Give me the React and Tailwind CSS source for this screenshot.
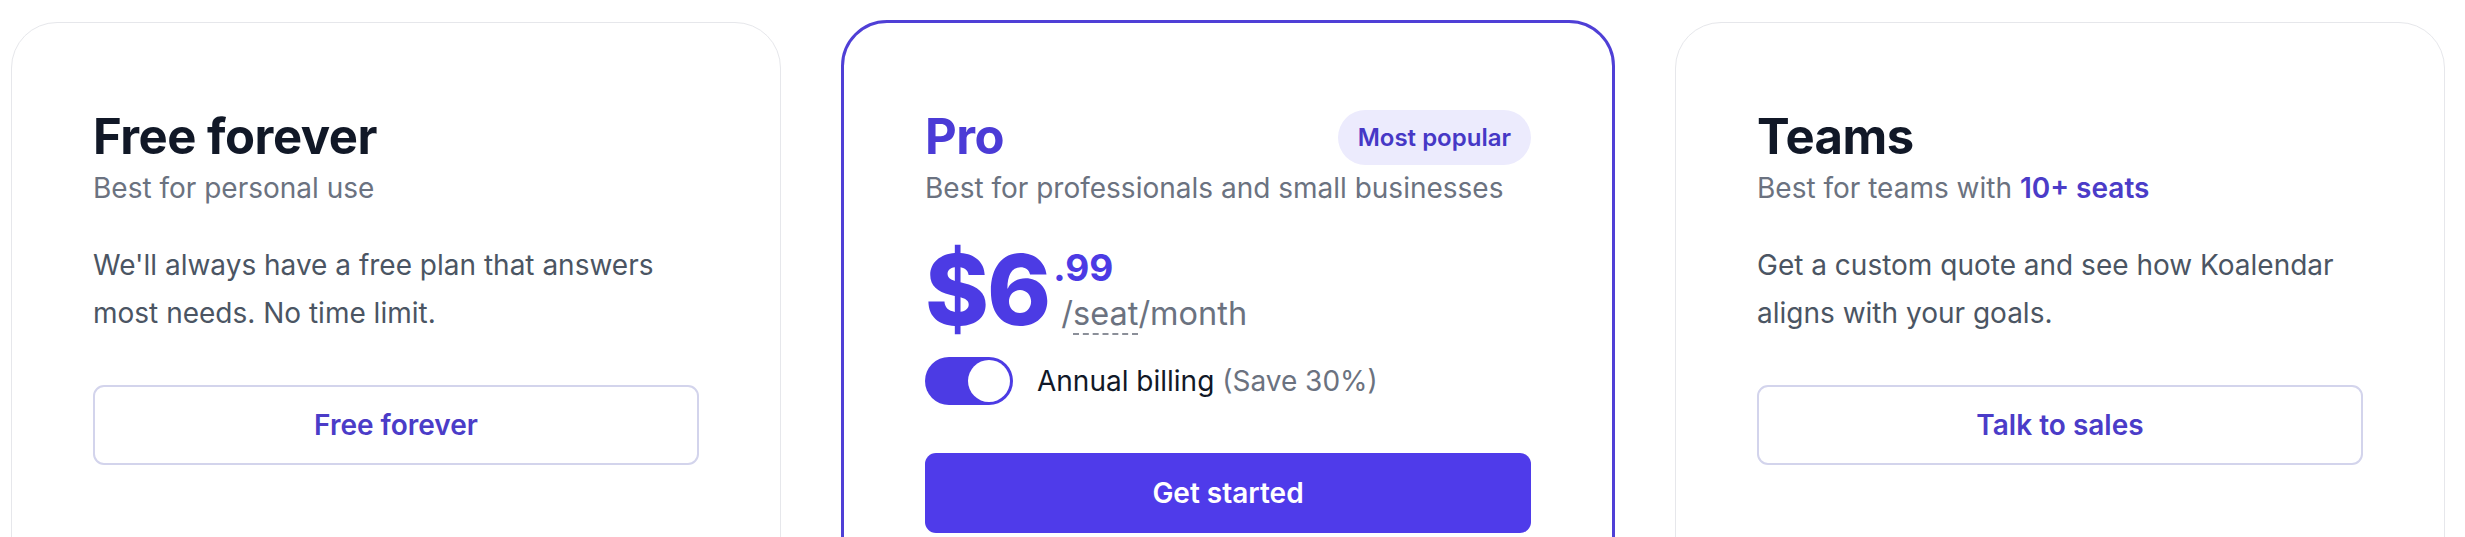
import { useState } from 'react';

const OutlineButton = ({ children }) => (
  <button
    type="button"
    className="mt-[48px] flex h-[80px] w-full items-center justify-center rounded-[11px] border-2 border-[#d3d4ec] bg-white text-[28px] font-semibold text-[#4b3cc8]"
  >
    {children}
  </button>
);

const Card = ({ children, featured }) => (
  <div
    className={`rounded-[46px] bg-white pt-[83px] pb-[200px] ${
      featured
        ? '-mx-[2px] -mt-[2px] border-[3px] border-[#4f3fd6] px-[81px]'
        : 'border border-[#e6e7eb] px-[81px]'
    }`}
  >
    {children}
  </div>
);

const Title = ({ children, className = 'text-[#111827]' }) => (
  <h3 className={`text-[49px] leading-[62px] font-bold tracking-[-0.01em] ${className}`}>{children}</h3>
);

const Subtitle = ({ children }) => (
  <p className="text-[28px] leading-[40px] text-[#6b7280]">{children}</p>
);

const Body = ({ children }) => (
  <p className="mt-[33px] text-[28px] leading-[48px] text-[#4b5563]">{children}</p>
);

export default function App() {
  const [annual, setAnnual] = useState(true);

  return (
    <div className="h-[537px] overflow-hidden bg-white font-['Inter','Noto_Sans',sans-serif]">
      <div className="grid w-[2445px] grid-cols-3 gap-[62px] pt-[22px] pl-[11px]">
        <Card>
          <Title>Free forever</Title>
          <Subtitle>Best for personal use</Subtitle>
          <Body>We'll always have a free plan that answers most needs. No time limit.</Body>
          <OutlineButton>Free forever</OutlineButton>
        </Card>

        <Card featured>
          <div className="flex items-center justify-between">
            <Title className="text-[#4b3bd6]">Pro</Title>
            <span className="rounded-full bg-[#ecebfd] px-[20px] py-[12px] text-[24px] leading-[31px] font-semibold text-[#4638c6]">
              Most popular
            </span>
          </div>
          <Subtitle>Best for professionals and small businesses</Subtitle>

          <div className="mt-[33px] flex items-start text-[#4c3be4]">
            <span className="text-[97px] leading-none font-extrabold tracking-[-0.02em]">$6</span>
            <div className="ml-[4px] flex flex-col pt-[8px]">
              <span className="text-[37px] leading-none font-bold">.99</span>
              <span className="mt-[12px] ml-[8px] text-[32.5px] leading-none text-[#6b7280]">
                /<span className="border-b-2 border-dashed border-[#8b8f99]">seat</span>/month
              </span>
            </div>
          </div>

          <div className="mt-[19px] flex items-center gap-[24px]">
            <button
              type="button"
              onClick={() => setAnnual(!annual)}
              className={`flex h-[48px] w-[88px] rounded-full p-[3px] ${
                annual ? 'justify-end bg-[#4c3be4]' : 'justify-start bg-gray-300'
              }`}
            >
              <span className="h-[42px] w-[42px] rounded-full bg-white" />
            </button>
            <span className="text-[28px] text-[#111827]">
              Annual billing <span className="text-[#6b7280]">(Save 30%)</span>
            </span>
          </div>

          <button
            type="button"
            className="mt-[48px] flex h-[80px] w-full items-center justify-center rounded-[11px] bg-[#4f3bea] text-[28px] font-semibold text-white"
          >
            Get started
          </button>
        </Card>

        <Card>
          <Title>Teams</Title>
          <Subtitle>
            Best for teams with <span className="font-semibold text-[#4b3cc8]">10+ seats</span>
          </Subtitle>
          <Body>Get a custom quote and see how Koalendar aligns with your goals.</Body>
          <OutlineButton>Talk to sales</OutlineButton>
        </Card>
      </div>
    </div>
  );
}
